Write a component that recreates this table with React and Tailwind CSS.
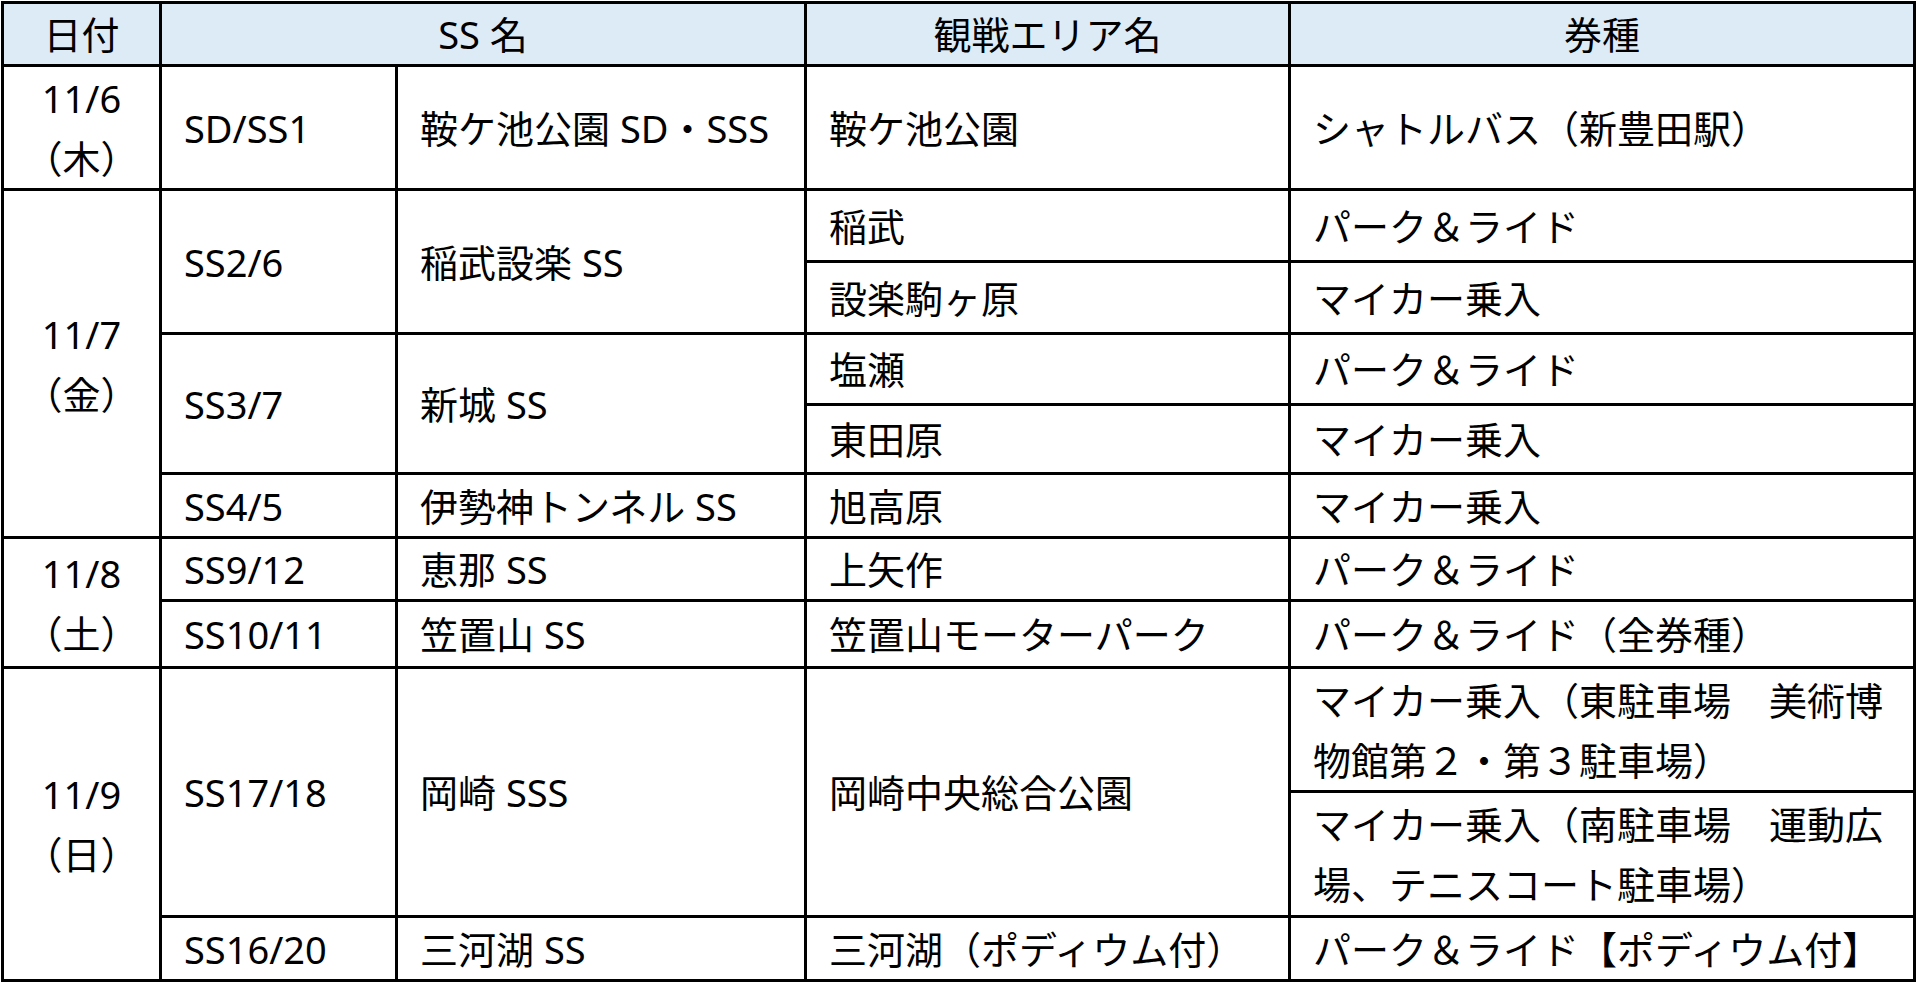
import React from 'react';

const cell = 'border-[3px] border-black align-middle';
const left = `${cell} pl-[22px] whitespace-nowrap`;
const center = `${cell} text-center`;

const App = () => {
  return (
    <div className="w-[1920px] h-[987px] bg-white text-black font-['Noto_Sans','Noto_Sans_CJK_JP',sans-serif] text-[38px] leading-[60px] overflow-hidden">
      <table className="ml-px mt-px w-[1912px] table-fixed border-collapse">
        <colgroup>
          <col className="w-[158px]" />
          <col className="w-[236px]" />
          <col className="w-[409px]" />
          <col className="w-[484px]" />
          <col className="w-[625px]" />
        </colgroup>
        <thead>
          <tr className="h-[62px] bg-[#ddebf7]">
            <th className={`${center} font-normal`}>日付</th>
            <th colSpan={2} className={`${center} font-normal`}>SS 名</th>
            <th className={`${center} font-normal`}>観戦エリア名</th>
            <th className={`${center} font-normal`}>券種</th>
          </tr>
        </thead>
        <tbody>
          {/* 11/6 */}
          <tr className="h-[124px]">
            <td className={center}>11/6<br />（木）</td>
            <td className={left}>SD/SS1</td>
            <td className={left}>鞍ケ池公園 SD・SSS</td>
            <td className={left}>鞍ケ池公園</td>
            <td className={left}>シャトルバス（新豊田駅）</td>
          </tr>

          {/* 11/7 */}
          <tr className="h-[72px]">
            <td rowSpan={5} className={center}>11/7<br />（金）</td>
            <td rowSpan={2} className={left}>SS2/6</td>
            <td rowSpan={2} className={left}>稲武設楽 SS</td>
            <td className={left}>稲武</td>
            <td className={left}>パーク＆ライド</td>
          </tr>
          <tr className="h-[72px]">
            <td className={left}>設楽駒ヶ原</td>
            <td className={left}>マイカー乗入</td>
          </tr>
          <tr className="h-[71px]">
            <td rowSpan={2} className={left}>SS3/7</td>
            <td rowSpan={2} className={left}>新城 SS</td>
            <td className={left}>塩瀬</td>
            <td className={left}>パーク＆ライド</td>
          </tr>
          <tr className="h-[69px]">
            <td className={left}>東田原</td>
            <td className={left}>マイカー乗入</td>
          </tr>
          <tr className="h-[64px]">
            <td className={left}>SS4/5</td>
            <td className={left}>伊勢神トンネル SS</td>
            <td className={left}>旭高原</td>
            <td className={left}>マイカー乗入</td>
          </tr>

          {/* 11/8 */}
          <tr className="h-[63px]">
            <td rowSpan={2} className={center}>11/8<br />（土）</td>
            <td className={left}>SS9/12</td>
            <td className={left}>恵那 SS</td>
            <td className={left}>上矢作</td>
            <td className={left}>パーク＆ライド</td>
          </tr>
          <tr className="h-[67px]">
            <td className={left}>SS10/11</td>
            <td className={left}>笠置山 SS</td>
            <td className={left}>笠置山モーターパーク</td>
            <td className={left}>パーク＆ライド（全券種）</td>
          </tr>

          {/* 11/9 */}
          <tr className="h-[124px]">
            <td rowSpan={3} className={center}>11/9<br />（日）</td>
            <td rowSpan={2} className={left}>SS17/18</td>
            <td rowSpan={2} className={left}>岡崎 SSS</td>
            <td rowSpan={2} className={left}>岡崎中央総合公園</td>
            <td className={left}>マイカー乗入（東駐車場　美術博<br />物館第２・第３駐車場）</td>
          </tr>
          <tr className="h-[125px]">
            <td className={left}>マイカー乗入（南駐車場　運動広<br />場、テニスコート駐車場）</td>
          </tr>
          <tr className="h-[64px]">
            <td className={left}>SS16/20</td>
            <td className={left}>三河湖 SS</td>
            <td className={left}>三河湖（ポディウム付）</td>
            <td className={left}>パーク＆ライド【ポディウム付】</td>
          </tr>
        </tbody>
      </table>
    </div>
  );
};

export default App;
